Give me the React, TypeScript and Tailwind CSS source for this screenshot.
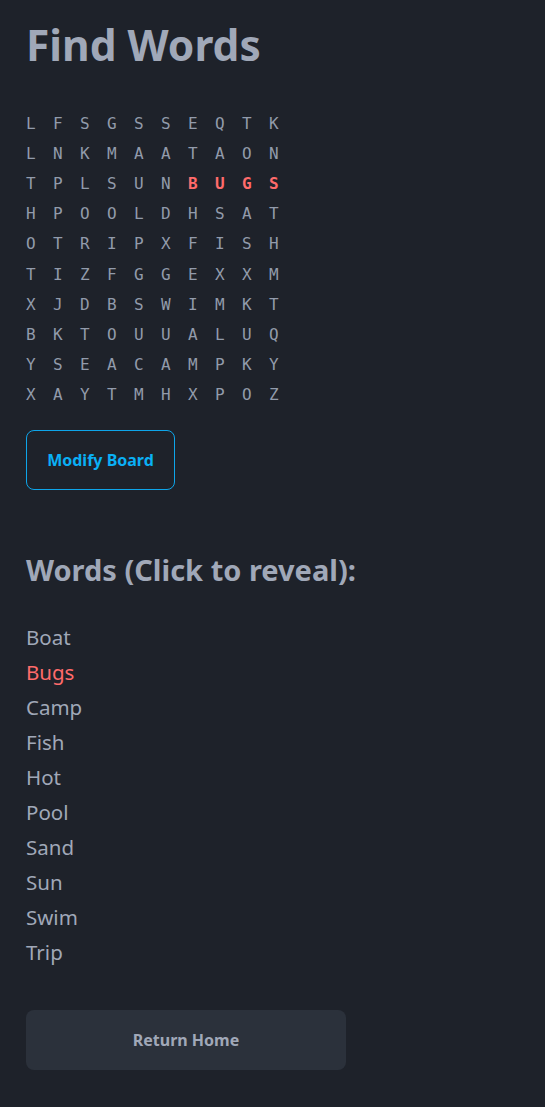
const board = [
  "LFSGSSEQTK",
  "LNKMAATAON",
  "TPLSUNBUGS",
  "HPOOLDHSAT",
  "OTRIPXFISH",
  "TIZFGGEXXM",
  "XJDBSWIMKT",
  "BKTOUUALUQ",
  "YSEACAMPKY",
  "XAYTMHXPOZ",
];

const words = ["Boat", "Bugs", "Camp", "Fish", "Hot", "Pool", "Sand", "Sun", "Swim", "Trip"];

// found word cells: row 2, cols 6-9
const isFound = (r: number, c: number) => r === 2 && c >= 6;

export default function App() {
  return (
    <div className="min-h-screen bg-[#1e222a] px-[26px] pt-[15px] pb-[37px] font-['Noto_Sans',sans-serif] text-[#a0a8b8]">
      <h1 className="text-[42.5px] font-bold leading-[60px]">Find Words</h1>

      <div className="mt-[34px] font-['DejaVu_Sans_Mono',monospace] text-[16px]">
        {board.map((row, r) => (
          <div key={r} className="flex h-[30.1px] items-center">
            {row.split("").map((ch, c) => (
              <span
                key={c}
                className={
                  "w-[27px] " + (isFound(r, c) ? "font-bold text-[#ff6b6b]" : "text-[#929bab]")
                }
              >
                {ch}
              </span>
            ))}
          </div>
        ))}
      </div>

      <button className="mt-[20px] h-[60px] w-[149px] rounded-lg border border-[#0ea5e9] text-[16px] font-bold text-[#0ab0f5]">
        Modify Board
      </button>

      <h2 className="mt-[60px] text-[29px] font-bold leading-[40px]">Words (Click to reveal):</h2>

      <ul className="mt-[30px]">
        {words.map((w) => (
          <li
            key={w}
            className={"h-[35px] text-[20.5px] leading-[35px] " + (w === "Bugs" ? "text-[#ff6b6b]" : "")}
          >
            {w}
          </li>
        ))}
      </ul>

      <button className="mt-[40px] h-[60px] w-[320px] rounded-lg bg-[#2b313b] text-[16px] font-bold text-[#a0a8b8]">
        Return Home
      </button>
    </div>
  );
}
